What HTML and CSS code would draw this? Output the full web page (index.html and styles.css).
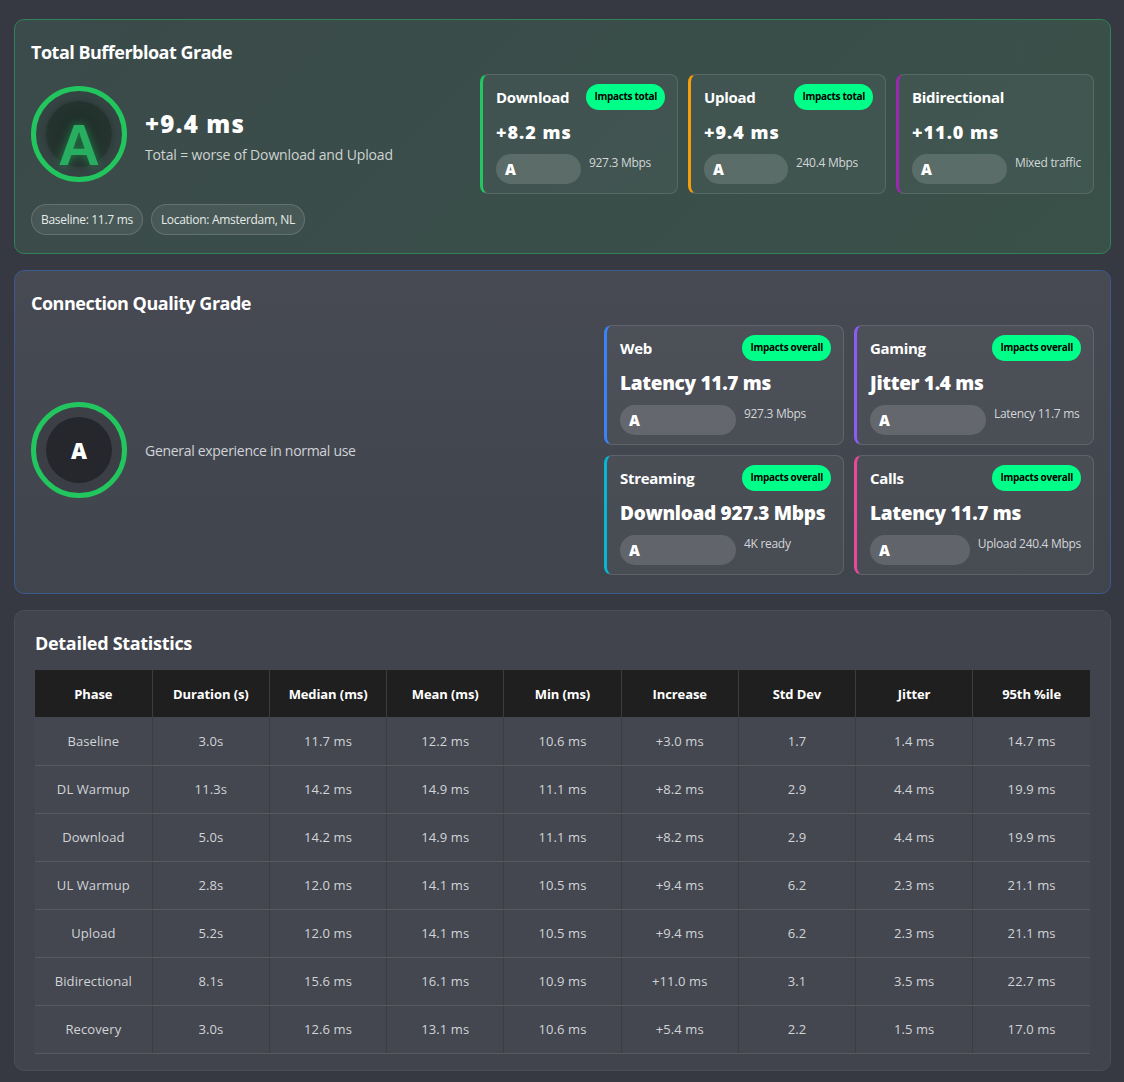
FILE: index.html
```html
<!DOCTYPE html>
<html lang="en">
<head>
<meta charset="utf-8">
<title>Bufferbloat Results</title>
<link rel="stylesheet" href="styles.css">
</head>
<body>
<main class="page">
  <section class="card card-total">
    <h2 class="card-title">Total Bufferbloat Grade</h2>
    <div class="total-row">
      <div class="total-left">
        <div class="grade-main">
          <div class="grade-ring"><div class="grade-disc disc-glow"><span class="grade-letter letter-big">A</span></div></div>
          <div class="grade-info">
            <div class="grade-value">+9.4 ms</div>
            <div class="grade-desc">Total = worse of Download and Upload</div>
          </div>
        </div>
        <div class="pills">
          <span class="pill">Baseline: 11.7 ms</span>
          <span class="pill">Location: Amsterdam, NL</span>
        </div>
      </div>
      <div class="sub-grid grid-three">
        <div class="sub-card c-green">
          <div class="sub-head"><span class="sub-title">Download</span><span class="badge">Impacts total</span></div>
          <div class="sub-value value-num">+8.2 ms</div>
          <div class="sub-foot"><span class="grade-pill" style="width:85px">A</span><span class="sub-note">927.3 Mbps</span></div>
        </div>
        <div class="sub-card c-orange">
          <div class="sub-head"><span class="sub-title">Upload</span><span class="badge">Impacts total</span></div>
          <div class="sub-value value-num">+9.4 ms</div>
          <div class="sub-foot"><span class="grade-pill" style="width:84px">A</span><span class="sub-note">240.4 Mbps</span></div>
        </div>
        <div class="sub-card c-purple">
          <div class="sub-head"><span class="sub-title">Bidirectional</span></div>
          <div class="sub-value value-num">+11.0 ms</div>
          <div class="sub-foot"><span class="grade-pill" style="width:95px">A</span><span class="sub-note">Mixed traffic</span></div>
        </div>
      </div>
    </div>
  </section>

  <section class="card card-quality">
    <h2 class="card-title">Connection Quality Grade</h2>
    <div class="quality-row">
      <div class="quality-left">
        <div class="grade-ring"><div class="grade-disc disc-dark"><span class="grade-letter letter-small">A</span></div></div>
        <div class="quality-desc">General experience in normal use</div>
      </div>
      <div class="sub-grid grid-two">
        <div class="sub-card c-blue">
          <div class="sub-head"><span class="sub-title">Web</span><span class="badge">Impacts overall</span></div>
          <div class="sub-value value-lg">Latency 11.7 ms</div>
          <div class="sub-foot"><span class="grade-pill" style="width:116px">A</span><span class="sub-note">927.3 Mbps</span></div>
        </div>
        <div class="sub-card c-violet">
          <div class="sub-head"><span class="sub-title">Gaming</span><span class="badge">Impacts overall</span></div>
          <div class="sub-value value-lg">Jitter 1.4 ms</div>
          <div class="sub-foot"><span class="grade-pill" style="width:116px">A</span><span class="sub-note">Latency 11.7 ms</span></div>
        </div>
        <div class="sub-card c-cyan">
          <div class="sub-head"><span class="sub-title">Streaming</span><span class="badge">Impacts overall</span></div>
          <div class="sub-value value-lg">Download 927.3 Mbps</div>
          <div class="sub-foot"><span class="grade-pill" style="width:116px">A</span><span class="sub-note">4K ready</span></div>
        </div>
        <div class="sub-card c-pink">
          <div class="sub-head"><span class="sub-title">Calls</span><span class="badge">Impacts overall</span></div>
          <div class="sub-value value-lg">Latency 11.7 ms</div>
          <div class="sub-foot"><span class="grade-pill" style="width:100px">A</span><span class="sub-note">Upload 240.4 Mbps</span></div>
        </div>
      </div>
    </div>
  </section>

  <section class="card card-stats">
    <h2 class="card-title stats-title">Detailed Statistics</h2>
    <table class="stats-table">
      <thead>
        <tr><th>Phase</th><th>Duration (s)</th><th>Median (ms)</th><th>Mean (ms)</th><th>Min (ms)</th><th>Increase</th><th>Std Dev</th><th>Jitter</th><th>95th %ile</th></tr>
      </thead>
      <tbody>
        <tr><td>Baseline</td><td>3.0s</td><td>11.7 ms</td><td>12.2 ms</td><td>10.6 ms</td><td>+3.0 ms</td><td>1.7</td><td>1.4 ms</td><td>14.7 ms</td></tr>
        <tr><td>DL Warmup</td><td>11.3s</td><td>14.2 ms</td><td>14.9 ms</td><td>11.1 ms</td><td>+8.2 ms</td><td>2.9</td><td>4.4 ms</td><td>19.9 ms</td></tr>
        <tr><td>Download</td><td>5.0s</td><td>14.2 ms</td><td>14.9 ms</td><td>11.1 ms</td><td>+8.2 ms</td><td>2.9</td><td>4.4 ms</td><td>19.9 ms</td></tr>
        <tr><td>UL Warmup</td><td>2.8s</td><td>12.0 ms</td><td>14.1 ms</td><td>10.5 ms</td><td>+9.4 ms</td><td>6.2</td><td>2.3 ms</td><td>21.1 ms</td></tr>
        <tr><td>Upload</td><td>5.2s</td><td>12.0 ms</td><td>14.1 ms</td><td>10.5 ms</td><td>+9.4 ms</td><td>6.2</td><td>2.3 ms</td><td>21.1 ms</td></tr>
        <tr><td>Bidirectional</td><td>8.1s</td><td>15.6 ms</td><td>16.1 ms</td><td>10.9 ms</td><td>+11.0 ms</td><td>3.1</td><td>3.5 ms</td><td>22.7 ms</td></tr>
        <tr><td>Recovery</td><td>3.0s</td><td>12.6 ms</td><td>13.1 ms</td><td>10.6 ms</td><td>+5.4 ms</td><td>2.2</td><td>1.5 ms</td><td>17.0 ms</td></tr>
      </tbody>
    </table>
  </section>
</main>
</body>
</html>
```

FILE: styles.css
```css
* { box-sizing: border-box; }

body {
  margin: 0;
  background: #363941;
  color: #ffffff;
  font-family: "Open Sans", "Segoe UI", "DejaVu Sans", sans-serif;
}

.page {
  padding: 19px 13px 12px 14px;
  display: flex;
  flex-direction: column;
  gap: 16px;
}

.card {
  border-radius: 10px;
  border: 1px solid rgba(255, 255, 255, 0.1);
  padding: 20px 16px 18px;
}

.card-total {
  background: linear-gradient(135deg, #3b4a4a 0%, #395149 100%);
  border-color: #2f8356;
}

.card-quality {
  background: linear-gradient(180deg, #474a53 0%, #40444c 100%);
  border-color: #3c5a8e;
  padding-bottom: 18px;
}

.card-stats {
  background: #41444c;
  border-color: #4b4e55;
  padding: 20px 20px 16px;
}

.card-title {
  margin: 0 0 10px;
  font-size: 18px;
  line-height: 24px;
  font-weight: 700;
  letter-spacing: -0.5px;
}

.stats-title {
  margin-bottom: 15px;
  letter-spacing: -0.3px;
}

/* total row */
.total-row {
  display: grid;
  grid-template-columns: 1fr 614px;
  gap: 10px;
  align-items: start;
}

.total-left {
  padding-top: 12px;
}

.grade-main {
  display: flex;
  align-items: flex-start;
  gap: 18px;
}

.grade-ring {
  width: 96px;
  height: 96px;
  flex: 0 0 96px;
  border-radius: 50%;
  border: 5px solid #22c55e;
  display: flex;
  align-items: center;
  justify-content: center;
  background: rgba(0, 0, 0, 0.08);
}

.grade-disc {
  width: 66px;
  height: 66px;
  border-radius: 50%;
  display: flex;
  align-items: center;
  justify-content: center;
}

.disc-glow {
  background: radial-gradient(circle at 50% 45%, #1f2e2a 0%, #25332f 60%, #2c3b37 100%);
  box-shadow: 0 0 8px rgba(0, 0, 0, 0.25);
}

.disc-dark {
  background: #25272c;
}

.grade-letter {
  font-weight: 800;
  line-height: 1;
}

.letter-big {
  font-size: 58px;
  color: #27ae60;
  text-shadow: 0 0 10px rgba(34, 197, 94, 0.55);
  font-family: "Liberation Sans", "Open Sans", sans-serif;
  font-weight: 700;
  padding-top: 22px;
}

.letter-small {
  font-size: 22px;
  color: #ffffff;
}

.grade-info {
  padding-top: 23px;
}

.grade-value {
  font-size: 24px;
  line-height: 30px;
  font-weight: 800;
  letter-spacing: 1.2px;
}

.grade-desc {
  margin-top: 6px;
  font-size: 14px;
  line-height: 20px;
  color: #cdd3d1;
  letter-spacing: -0.15px;
}

.pills {
  display: flex;
  gap: 8px;
  margin-top: 22px;
}

.pill {
  height: 31px;
  line-height: 29px;
  padding: 0 9px;
  border-radius: 16px;
  font-size: 12px;
  letter-spacing: -0.3px;
  color: #e6ebe9;
  background: rgba(255, 255, 255, 0.07);
  border: 1px solid rgba(255, 255, 255, 0.15);
}

/* sub cards */
.sub-grid {
  display: grid;
  gap: 10px;
}

.grid-three {
  grid-template-columns: repeat(3, 1fr);
}

.grid-two {
  grid-template-columns: repeat(2, 1fr);
}

.sub-card {
  border-radius: 8px;
  border: 1px solid rgba(255, 255, 255, 0.12);
  border-left-width: 3px;
  background: rgba(255, 255, 255, 0.04);
  padding: 9px 12px 9px 13px;
}

.c-green { border-left-color: #22c55e; }
.c-orange { border-left-color: #f59e0b; }
.c-purple { border-left-color: #9c27b0; }
.c-blue { border-left-color: #3b82f6; }
.c-violet { border-left-color: #8b5cf6; }
.c-cyan { border-left-color: #06b6d4; }
.c-pink { border-left-color: #ec4899; }

.sub-head {
  display: flex;
  align-items: center;
  justify-content: space-between;
  min-height: 26px;
}

.sub-title {
  font-size: 15px;
  font-weight: 700;
  letter-spacing: -0.3px;
}

.badge {
  height: 26px;
  line-height: 24px;
  padding: 0 8px;
  border-radius: 13px;
  background: #00ff88;
  color: #000000;
  font-size: 10px;
  font-weight: 700;
  letter-spacing: -0.3px;
}

.sub-value {
  margin-top: 9px;
  font-size: 18px;
  line-height: 27px;
  font-weight: 800;
  letter-spacing: -0.2px;
}

.value-num {
  letter-spacing: 1px;
}

.value-lg {
  font-size: 19px;
  letter-spacing: -0.3px;
}

.sub-foot {
  margin-top: 8px;
  display: flex;
  align-items: flex-start;
  gap: 8px;
}

.grade-pill {
  flex: 0 1 auto;
  height: 30px;
  line-height: 30px;
  border-radius: 15px;
  padding-left: 9px;
  background: rgba(255, 255, 255, 0.14);
  font-size: 15px;
  font-weight: 800;
  white-space: nowrap;
}

.sub-note {
  flex: 0 0 auto;
  margin-top: 1px;
  font-size: 12px;
  line-height: 16px;
  color: #d2d6d8;
  letter-spacing: -0.3px;
}

/* quality row */
.quality-row {
  display: grid;
  grid-template-columns: 1fr 490px;
  gap: 10px;
}

.quality-left {
  display: flex;
  align-items: center;
  gap: 18px;
}

.quality-left .grade-ring {
  background: rgba(0, 0, 0, 0.1);
}

.quality-desc {
  font-size: 14px;
  color: #d0d3d8;
  letter-spacing: -0.3px;
}

/* table */
.stats-table {
  width: 100%;
  border-collapse: collapse;
  table-layout: fixed;
  font-size: 13px;
}

.stats-table th {
  background: #1f1f1f;
  color: #ffffff;
  font-weight: 700;
  height: 47px;
  border-right: 1px solid #3c3c3c;
  letter-spacing: -0.1px;
}

.stats-table th:last-child,
.stats-table td:last-child {
  border-right: none;
}

.stats-table td {
  background: #44474f;
  color: #d1d4d8;
  height: 48px;
  text-align: center;
  border-right: 1px solid #3a3d42;
  border-bottom: 1px solid #575a60;
  letter-spacing: 0.1px;
}
```
